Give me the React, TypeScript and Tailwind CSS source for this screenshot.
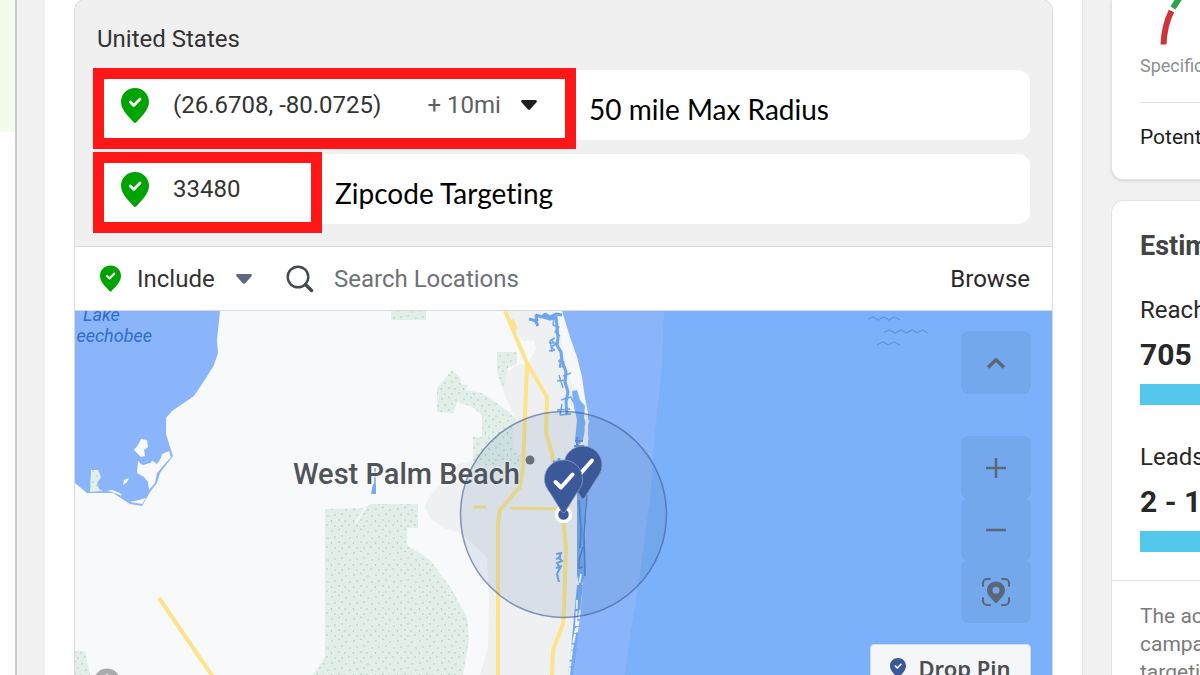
import type { ReactNode } from 'react'

type Target = {
  id: string
  name: string
  radius?: string
  note: string
}

const TARGETS: Target[] = [
  { id: 'coords', name: '(26.6708, -80.0725)', radius: '+ 10mi', note: '50 mile Max Radius' },
  { id: 'zip', name: '33480', note: 'Zipcode Targeting' },
]

const FRAME_WIDTH: Record<string, string> = {
  coords: 'w-[483px]',
  zip: 'w-[229px]',
}

const RESULTS = [
  { label: 'Reach', value: '705 - 2K' },
  { label: 'Leads', value: '2 - 14' },
]

function PinIcon({ className }: { className: string }) {
  return (
    <svg viewBox="0 0 28 35" className={className} aria-hidden="true">
      <path d="M14 0C6.2 0 0 6.1 0 13.8c0 4.4 2.2 8.200 5.200 12.200L12.600 34.300c.8.9 2 .9 2.800 0L22.800 26C25.800 22 28 18.200 28 13.800 28 6.100 21.800 0 14 0z" fill="currentColor" />
      <path d="M9.300 14l3.400 3.400 6.300-6.300" fill="none" stroke="#fff" strokeWidth="2.800" strokeLinecap="round" strokeLinejoin="round" />
    </svg>
  )
}

function Caret({ className }: { className: string }) {
  return (
    <svg viewBox="0 0 16 10" className={`pointer-events-none ${className}`} aria-hidden="true">
      <path d="M1.500 0h13c1.200 0 1.800 1.300 1 2.200L9.200 9.300c-.7.7-1.700.7-2.400 0L.5 2.200C-.3 1.300.3 0 1.500 0z" fill="currentColor" />
    </svg>
  )
}

function TargetRow({ target }: { target: Target }) {
  return (
    <li className="relative flex h-[70px] items-center rounded-xl bg-white pl-6">
      <PinIcon className="h-[35px] w-7 shrink-0 text-[#00a400]" />
      <span className="ml-6 text-2xl text-[#333]">{target.name}</span>
      {target.radius && (
        <label className="ml-[46px] flex items-center text-[#5f6062]">
          <select aria-label="Radius" className="appearance-none bg-transparent text-2xl">
            <option>{target.radius}</option>
          </select>
          <Caret className="ml-5 h-[10px] w-4 text-[#1c1e21]" />
        </label>
      )}
      {/* callout over the row */}
      <div className="pointer-events-none absolute -left-1 -top-0.5 flex items-center">
        <div className={`h-[81px] border-[11px] border-[#ff1616] ${FRAME_WIDTH[target.id]}`} />
        <span className="ml-[13px] whitespace-nowrap font-[Lato,sans-serif] text-[28px] text-black [font-variant-ligatures:none]">{target.note}</span>
      </div>
    </li>
  )
}

function MapPin({ x, y }: { x: number; y: number }) {
  return (
    <g transform={`translate(${x} ${y})`}>
      <path d="M0-19C-10.500-19-19-10.500-19 0c0 6 2.500 9.500 6 14.500L-1.500 33c.8 1 2.200 1 3 0L13 14.500C16.500 9.500 19 6 19 0 19-10.500 10.500-19 0-19z" fill="#3b5998" stroke="#8a9cc4" strokeWidth="0.8" />
      <path d="M-8 3l5.500 5.500L9-4.500" fill="none" stroke="#fff" strokeWidth="4" strokeLinecap="round" strokeLinejoin="round" />
    </g>
  )
}

function MapCanvas() {
  return (
    <svg viewBox="75 311 977 364" preserveAspectRatio="xMidYMin slice" className="absolute inset-0 h-full w-full" role="img" aria-label="Map of West Palm Beach">
      <defs>
        <pattern id="marsh" width="22" height="22" patternUnits="userSpaceOnUse">
          <rect width="22" height="22" fill="#e2efe9" />
          <g fill="#a3bdb0">
            <circle cx="2" cy="3" r=".7" /><circle cx="9" cy="1.500" r=".7" /><circle cx="16" cy="4" r=".7" />
            <circle cx="5" cy="9" r=".7" /><circle cx="12" cy="8" r=".7" /><circle cx="20" cy="10" r=".7" />
            <circle cx="1.500" cy="15" r=".7" /><circle cx="9" cy="14" r=".7" /><circle cx="15" cy="15" r=".7" />
            <circle cx="5" cy="20" r=".7" /><circle cx="12" cy="20" r=".7" /><circle cx="19" cy="19" r=".7" />
          </g>
        </pattern>
      </defs>

      <rect x="75" y="311" width="977" height="364" fill="#f8f9fb" />

      {/* built-up area */}
      <path d="M505 311L515 331 524 341 534 340 536 349 529 362 516 366 508 371 502 383 505 396 515 417 513 447 480 459 455 465 428 499 425 507 431 519 443 528 458 532 470 541 487 558 489 600 488 647 480 675H572L582 597 588 500V413L575 360 560 311z" fill="#eff0f2" />
      <path d="M558 311H561L572 345 582 380 586 420 576 396 570 380 562 345z" fill="#f6f7f9" />

      {/* wetlands */}
      <g fill="url(#marsh)">
        <path d="M391 311H426V320H391z" />
        <path d="M497 352H517V364L508 368 503 390 497 372z" />
        <path d="M452 370L460 378 461 384 468 385 465 390 482 393 493 400 515 417 513 447 522 457 520 467 473 465V437H482V415L472 407 457 402 453 413 437 412V388z" />
        <path d="M325 509L365 508 370 504H418V528H407V545L430 560 450 587 467 617 469 640 463 675H313L325 657z" />
        <path d="M75 651H85L90 675H75z" />
      </g>
      <path d="M356 523L367 505" stroke="#f8f9fb" strokeWidth="1.500" />

      {/* lake */}
      <path d="M75 311H220L217 340 218 353 214 365 206 378 194 396 172 411 166 418V434L170 447 173 456 160 473 157 483 150 492 142 506 130 504 113 493H87L75 483z" fill="#8bb5fb" />
      <g fill="#f8f9fb">
        <path d="M169 451L162 454 161 458 157 464 153 461 142 465 138 461 137 473 144 477 148 482 149 490 155 483 157 473 171 457z" />
        <path d="M141 439L147 440 148 447 144 450 145 456 141 457 134 450 138 445z" />
        <path d="M123 485L124 480 129 478 127 482z" />
        <path d="M130 502L139 500 146 498 142 504z" />
        <path d="M107 491L112 490 120 493 122 496 112 492z" />
      </g>
      <path d="M146 455L150 462 143 464" fill="none" stroke="#8bb5fb" strokeWidth="2" />
      <path d="M91 470H98L101 477 97 483 99 489 103 491 90 492z" fill="url(#marsh)" />
      <path d="M375 468V484" stroke="#8bb5fb" strokeWidth="2" />
      <path d="M373 484H376V494H371z" fill="#7baaf2" />

      {/* highways */}
      <g fill="none" stroke="#fde38a" strokeWidth="4" strokeLinejoin="round">
        <path d="M505 311L513 330 527 363 547 397 546 433 552 453 554 470" />
        <path d="M511 320L515 330" strokeWidth="6" />
        <path d="M527 363L525 417 523 467 520 487 500 510 498 523V675" />
        <path d="M473 507H486M510 508L557 509" strokeWidth="3" />
        <path d="M563 517L566 547 564 610 563 624 553 650 552 675" />
        <path d="M159 598L213 677" />
      </g>

      {/* ocean */}
      <path d="M562 311L570 337 577 357 582 377 585 398 588 413V440L587 500 585 547 583 577 582 597 577 632 575 647 570 675H1053V311z" fill="#8bb5fb" />
      <path d="M664 311L662 367 655 433 650 500 640 573 630 637 625 675H1053V311z" fill="#7bb0fa" />

      {/* intracoastal waterway */}
      <g fill="none" stroke="#6da5f0" strokeLinejoin="bevel">
        <path d="M529 319L537 321 536 315 542 317 545 314 550 317 556 314 562 315M535 320L538 326M543 317L550 319 556 318M556 316L557 328 558 338 557 345 561 352 562 361 566 372 565 382 568 392 566 402 567 415" strokeWidth="3" />
        <path d="M554 318L553 325 559 327 555 332 560 336M549 351L555 350 551 347 556 344 551 340 555 338M550 340L552 352M549 343H557M558 361L564 362 559 366 565 367M560 359V368M563 376L571 373M557 381L567 380M559 375L563 388M561 400L571 397 573 402M557 410L570 409M562 404L560 415 571 414" strokeWidth="1.500" />
      </g>
      <path d="M572 391L577 390 580 400 585 406 584 418 586 424 583 440 577 447 575 440 577 420 573 402z" fill="#7baff6" />
      <path d="M575 441H583M574 446H584M577 437V449" stroke="#628fd3" strokeWidth="2" />
      <path d="M588 420L586 427 587 440" stroke="#eef2f8" strokeWidth="3" fill="none" />
      <path d="M577 490H586L585 575 580 590 577 575z" fill="#72a8f2" />
      <path d="M587 495L584 535 585 576M579 500L581 530 580 548M583 547L579 560V568L583 567" fill="none" stroke="#4f80c4" strokeWidth="1.500" />
      <path d="M577 585L574 616 571 650 568 675H573L577 645 580 610 583 585z" fill="#72a9f4" />
      <path d="M581 574L579 585M577 600L576 629 572 649 569 675M580 610L577 632" fill="none" stroke="#f3f7fc" strokeWidth="2" strokeDasharray="9 2 5 1" />
      <path d="M556 554L561 553 559 558 562 561 557 563 560 568 557 574 559 582M561 557L556 559M562 566L556 568" fill="none" stroke="#6da5f0" strokeWidth="2" />
      <path d="M553 462H559V458" fill="none" stroke="#6da5f0" strokeWidth="3" />

      <g fill="none" stroke="#5e96e4" strokeWidth="1.300">
        <path d="M868 319L873 317 878 320 884 317 889 320 894 317 900 320" />
        <path d="M884 332L890 330 895 333 901 330 906 333 912 330 917 333 922 330 928 333" />
        <path d="M877 345L883 342 888 345 894 342 900 345" />
      </g>

      <g className="font-[Roboto,sans-serif]">
        <text x="83" y="321" fontSize="18" fontStyle="italic" fill="#2f6fc6">Lake</text>
        <text x="152" y="342" fontSize="18" fontStyle="italic" textAnchor="end" fill="#2f6fc6">eechobee</text>
        <text x="293" y="484" fontSize="29" fontWeight="500" fill="#505357" stroke="#f8f9fb" strokeWidth="3" strokeOpacity=".6" paintOrder="stroke">West Palm Beach</text>
      </g>
      <circle cx="530" cy="460" r="4.500" fill="#6f737a" />

      {/* targeting radius */}
      <circle cx="563.500" cy="514.500" r="103" fill="#3b6c98" fillOpacity=".12" stroke="#3b5998" strokeOpacity=".6" strokeWidth="1.500" />
      <circle cx="563.500" cy="514.500" r="7" fill="#3b5998" stroke="#fff" strokeWidth="3.500" />
      <MapPin x={583} y={465} />
      <MapPin x={563.5} y={479} />

      <circle cx="107" cy="682" r="13.500" fill="#a9abad" />
      <circle cx="107" cy="675" r="1.500" fill="#e5e5e5" />
    </svg>
  )
}

function MapButton({ label, children }: { label: string; children: ReactNode }) {
  return (
    <button type="button" aria-label={label} className="flex h-[63px] w-[70px] items-center justify-center rounded-lg bg-[#74a8ec] text-[#5b6776]">
      {children}
    </button>
  )
}

function MapControls() {
  return (
    <div className="absolute right-[21px] top-5 flex flex-col items-end">
      <MapButton label="Collapse map">
        <svg viewBox="0 0 20 12" className="h-3 w-5" fill="none" stroke="currentColor" strokeWidth="3.500">
          <path d="M2 10.500L10 2.800l8 7.700" strokeLinejoin="round" />
        </svg>
      </MapButton>
      <div className="mt-[42px] flex flex-col -space-y-px">
        <MapButton label="Zoom in">
          <svg viewBox="0 0 20 20" className="h-5 w-5" stroke="currentColor" strokeWidth="2.500">
            <path d="M0 10h20M10 0v20" />
          </svg>
        </MapButton>
        <MapButton label="Zoom out">
          <svg viewBox="0 0 20 20" className="h-5 w-5" stroke="currentColor" strokeWidth="2.500">
            <path d="M0 10h20" />
          </svg>
        </MapButton>
        <MapButton label="Fit to pins">
          <svg viewBox="0 0 28 28" className="h-7 w-7" fill="none" stroke="currentColor" strokeWidth="2" strokeLinecap="round">
            <path d="M1 8V5a4 4 0 0 1 4-4h3M20 1h3a4 4 0 0 1 4 4v3M27 20v3a4 4 0 0 1-4 4h-3M8 27H5a4 4 0 0 1-4-4v-3" />
            <path fillRule="evenodd" stroke="none" fill="currentColor" d="M14 3.500c-5 0-9 3.900-9 8.800 0 3 1.500 5 3.200 7l4.700 5.200c.6.700 1.600.7 2.200 0l4.700-5.200c1.700-2 3.200-4 3.200-7 0-4.900-4-8.800-9-8.800zm0 5.200a3.500 3.500 0 1 1 0 7 3.500 3.500 0 0 1 0-7z" />
          </svg>
        </MapButton>
      </div>
      <button type="button" className="mt-[21px] flex h-12 w-[161px] items-center justify-center gap-3 rounded-sm border border-[#d5dbe3] bg-[#f5f6f7] font-['Noto_Sans',sans-serif] text-[22px] font-semibold text-[#4b4f56]">
        <PinIcon className="h-5 w-4 text-[#3b5998]" />
        Drop Pin
      </button>
    </div>
  )
}

function ResultsSidebar() {
  return (
    <aside className="w-[89px] shrink-0 whitespace-nowrap">
      <section className="w-[360px] rounded-b-xl border border-t-0 border-[#e2e2e2] bg-white px-7 pb-7 shadow-sm">
        <svg viewBox="0 0 120 54" className="h-[54px] w-[120px]" fill="none" strokeWidth="6" aria-hidden="true">
          <path d="M23.500 44.500C24 32 26.500 21 31.500 11" stroke="#d13438" />
          <path d="M33 8C35.500 4 38 0 41-4" stroke="#31a24c" />
        </svg>
        <p className="text-lg leading-6 text-[#8d8f92]">Specific</p>
        <p className="mt-6 border-t border-[#e2e2e2] pt-5 text-[21px] leading-7 text-[#1c1e21]">Potential Reach:</p>
      </section>

      <section className="mt-5 w-[360px] rounded-xl border border-[#e2e2e2] bg-white pt-[29px]">
        <h2 className="px-7 text-[27px] font-bold leading-8 text-[#444]">Estimated Daily Results</h2>
        <dl className="mt-9 flex flex-col gap-10 px-7">
          {RESULTS.map(r => (
            <div key={r.label}>
              <dt className="text-2xl leading-6 text-[#282828]">{r.label}</dt>
              <dd>
                <p className="mt-[17px] text-3xl font-bold leading-8 text-[#282828]">{r.value}</p>
                <div className="mt-[13px] h-[21px] bg-[#54c7ec]" />
              </dd>
            </div>
          ))}
        </dl>
        <p className="mt-7 border-t border-[#e2e2e2] px-7 pt-[21px] text-[21px] leading-7 text-[#7b7b7b]">
          <span className="block">The accuracy of estimates is</span>
          <span className="block">campaign data, the budget</span>
          <span className="block">targeting criteria and ad</span>
        </p>
      </section>
    </aside>
  )
}

export default function App() {
  return (
    <div className="flex h-screen overflow-hidden bg-[#f1f1f2] font-[Roboto,sans-serif]">
      <div className="w-[17px] shrink-0 border-r-2 border-[#c9cbcb] bg-white">
        <div className="h-[132px] bg-[#f1fcec]" />
      </div>

      <main className="ml-7 flex min-w-0 flex-1 bg-white px-[29px]">
        <section className="-mt-px flex min-w-0 flex-1 flex-col overflow-hidden rounded-t-xl border border-b-0 border-[#d9dadc]">
          <div className="bg-[#f0f0f0] px-[22px] pb-[22px] pt-[23px]">
            <h3 className="text-2xl leading-8 text-[#333]">United States</h3>
            <ul className="mt-[15px] flex flex-col gap-3.5">
              {TARGETS.map(t => <TargetRow key={t.id} target={t} />)}
            </ul>
          </div>

          <div className="flex h-[65px] items-center border-y border-[#d9dadc] bg-white pl-[25px] pr-[22px] text-2xl text-[#333]">
            <PinIcon className="h-[27px] w-[21px] shrink-0 text-[#00a400]" />
            <label className="ml-4 flex items-center">
              <select aria-label="Include or exclude" className="appearance-none bg-transparent">
                <option>Include</option>
              </select>
              <Caret className="ml-[21px] h-[10px] w-4 text-[#616784]" />
            </label>
            <label className="ml-[34px] flex min-w-0 flex-1 items-center">
              <svg viewBox="0 0 28 28" className="h-7 w-7 shrink-0" fill="none" stroke="#444950" aria-hidden="true">
                <circle cx="12" cy="12" r="10.300" strokeWidth="2.400" />
                <path d="M19.500 19.500L25.500 25.500" strokeWidth="3.500" strokeLinecap="round" />
              </svg>
              <input type="text" aria-label="Search Locations" placeholder="Search Locations" className="ml-5 min-w-0 flex-1 bg-transparent placeholder:text-[#6f7276] focus:outline-none" />
            </label>
            <button type="button" className="ml-4 text-[#282828]">Browse</button>
          </div>

          <div className="relative min-h-[364px] flex-1 overflow-hidden">
            <MapCanvas />
            <MapControls />
          </div>
        </section>
      </main>

      <div className="w-[29px] shrink-0 border-l border-[#e4e4e5]" />
      <ResultsSidebar />
    </div>
  )
}
